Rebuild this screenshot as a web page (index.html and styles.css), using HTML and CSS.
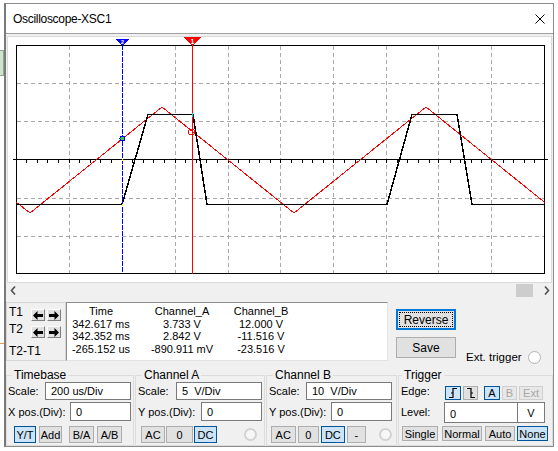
FILE: index.html
```html
<!DOCTYPE html>
<html lang="en">
<head>
    <meta charset="UTF-8">
    <title>Oscilloscope-XSC1</title>
    <link rel="stylesheet" href="styles.css">
</head>
<body>
<div class="desk">
    <div class="edge">
        <div class="edge-panel"></div>
        <div class="edge-wire"></div>
    </div>

    <div class="win">
        <div class="titlebar">
            <span class="title">Oscilloscope-XSC1</span>
            <svg class="close" width="10" height="10" viewBox="0 0 10 10">
                <path d="M0.5 0.5L9.5 9.5M9.5 0.5L0.5 9.5" stroke="#000" stroke-width="1"/>
            </svg>
        </div>

        <!-- scope display, drawn in page coordinates -->
        <div class="screen">
            <svg width="543" height="245" viewBox="8 37 543 245" shape-rendering="crispEdges">
                <g fill="none" stroke="#a9a9a9" stroke-dasharray="4 3">
                    <path d="M69.5 46V273M175.5 46V273M228.5 46V273M280.5 46V273M333.5 46V273M386.5 46V273M438.5 46V273M491.5 46V273"/>
                    <path d="M17 83.5H544M17 121.5H544M17 198.5H544M17 236.5H544"/>
                </g>
                <rect x="16.5" y="45.5" width="528" height="228" fill="none" stroke="#000" stroke-width="1.5"/>
                <path d="M13 159.5H548" stroke="#000" stroke-width="1.5"/>
                <path fill="none" stroke="#000" d="M26.5 160v3M37.5 160v3M47.5 160v3M58.5 160v3M69.5 160v3M79.5 160v3M90.5 160v3M100.5 160v3M111.5 160v3M122.5 160v3M132.5 160v3M143.5 160v3M153.5 160v3M164.5 160v3M175.5 160v3M185.5 160v3M196.5 160v3M206.5 160v3M217.5 160v3M228.5 160v3M238.5 160v3M249.5 160v3M259.5 160v3M270.5 160v3M280.5 160v3M291.5 160v3M302.5 160v3M312.5 160v3M323.5 160v3M333.5 160v3M344.5 160v3M355.5 160v3M365.5 160v3M376.5 160v3M386.5 160v3M397.5 160v3M407.5 160v3M418.5 160v3M429.5 160v3M438.5 160v3M450.5 160v3M460.5 160v3M471.5 160v3M481.5 160v3M491.5 160v3M503.5 160v3M513.5 160v3M524.5 160v3M534.5 160v3"/>

                <polyline points="16,202 30,213 162,107 294,213 426,107 545,202.6" fill="none" stroke="#ff0000"/>
                <polyline points="17,204.5 122,204.5 148,114.5 193,114.5 207,204.5 387,204.5 412,114.5 457,114.5 472,204.5 544,204.5" fill="none" stroke="#000" stroke-width="1.5"/>

                <path d="M122.5 45V273" stroke="#0000ff" stroke-dasharray="5 1"/>
                <path d="M192.5 44V274" stroke="#ff0000"/>

                <rect x="122" y="158.5" width="1" height="2" fill="#ffff00"/>
                <rect x="122" y="203.5" width="1" height="2" fill="#ffff00"/>
                <rect x="192" y="113" width="1" height="4" fill="#00e0e0"/>
                <circle cx="122.5" cy="138.5" r="2.5" fill="#33cc33" stroke="#0000ff"/>
                <circle cx="191.5" cy="132" r="3" fill="none" stroke="#ff0000"/>

                <polygon points="115.5,39 129.5,39 122.5,46" fill="#0000ff"/>
                <text x="122.5" y="44" class="mk mk-small">2</text>
                <polygon points="184,37 201,37 192.5,46" fill="#ff0000"/>
                <text x="192.5" y="43.5" class="mk">1</text>
            </svg>
        </div>

        <div class="hscroll">
            <div class="sb-left">
                <svg width="6" height="9" viewBox="0 0 6 9"><path d="M5 0.5L1.5 4.5L5 8.5" fill="none" stroke="#505050" stroke-width="1.6"/></svg>
            </div>
            <div class="sb-track"><div class="sb-thumb"></div></div>
            <div class="sb-right">
                <svg width="6" height="9" viewBox="0 0 6 9"><path d="M1 0.5L4.5 4.5L1 8.5" fill="none" stroke="#505050" stroke-width="1.6"/></svg>
            </div>
        </div>

        <div class="readbar">
            <div class="cursors">
                <div class="cur-row">
                    <span class="cur-label">T1</span>
                    <span class="arrow"><svg width="10" height="9" viewBox="0 0 10 9"><path d="M0 4.5L4.5 0V3H10V6H4.5V9Z"/></svg></span>
                    <span class="arrow"><svg width="10" height="9" viewBox="0 0 10 9"><path d="M10 4.5L5.5 0V3H0V6H5.5V9Z"/></svg></span>
                </div>
                <div class="cur-row">
                    <span class="cur-label">T2</span>
                    <span class="arrow"><svg width="10" height="9" viewBox="0 0 10 9"><path d="M0 4.5L4.5 0V3H10V6H4.5V9Z"/></svg></span>
                    <span class="arrow"><svg width="10" height="9" viewBox="0 0 10 9"><path d="M10 4.5L5.5 0V3H0V6H5.5V9Z"/></svg></span>
                </div>
                <div class="cur-diff">T2-T1</div>
            </div>

            <div class="readout">
                <span>Time</span><span>Channel_A</span><span>Channel_B</span>
                <span>342.617 ms</span><span>3.733 V</span><span>12.000 V</span>
                <span>342.352 ms</span><span>2.842 V</span><span>-11.516 V</span>
                <span>-265.152 us</span><span>-890.911 mV</span><span>-23.516 V</span>
            </div>

            <div class="actions">
                <div class="btn btn-big btn-default"><span class="focus">Reverse</span></div>
                <div class="btn btn-big">Save</div>
            </div>

            <div class="ext">Ext. trigger <span class="radio"></span></div>
        </div>

        <div class="groups">
            <fieldset class="group g-time">
                <legend>Timebase</legend>
                <div class="row r1"><span>Scale:</span><div class="field f-wide">200 us/Div</div></div>
                <div class="row r2"><span>X pos.(Div):</span><div class="field f-narrow">0</div></div>
                <div class="btnrow tb-btns">
                    <div class="btn on">Y/T</div>
                    <div class="btn">Add</div>
                    <div class="btn">B/A</div>
                    <div class="btn">A/B</div>
                </div>
            </fieldset>

            <fieldset class="group g-cha">
                <legend>Channel A</legend>
                <div class="row r1"><span>Scale:</span><div class="field f-wide">5  V/Div</div></div>
                <div class="row r2"><span>Y pos.(Div):</span><div class="field f-narrow">0</div></div>
                <div class="btnrow cha-btns">
                    <div class="btn">AC</div>
                    <div class="btn">0</div>
                    <div class="btn on">DC</div>
                    <span class="radio off"></span>
                </div>
            </fieldset>

            <fieldset class="group g-chb">
                <legend>Channel B</legend>
                <div class="row r1"><span>Scale:</span><div class="field f-wide">10  V/Div</div></div>
                <div class="row r2"><span>Y pos.(Div):</span><div class="field f-narrow">0</div></div>
                <div class="btnrow chb-btns">
                    <div class="btn">AC</div>
                    <div class="btn">0</div>
                    <div class="btn on">DC</div>
                    <div class="btn">-</div>
                    <span class="radio off"></span>
                </div>
            </fieldset>

            <fieldset class="group g-trig">
                <legend>Trigger</legend>
                <div class="trow edge-row">
                    <span class="t-label">Edge:</span>
                    <div class="btn on t-edge">
                        <svg width="10" height="10" viewBox="0 0 10 10"><path d="M1 9.5H5V0.5H9M3 5H5" fill="none" stroke="#000" stroke-width="1.2"/></svg>
                    </div>
                    <div class="btn t-edge t-fall">
                        <svg width="10" height="10" viewBox="0 0 10 10"><path d="M1 0.5H5V9.5H9M5 5H7" fill="none" stroke="#000" stroke-width="1.2"/></svg>
                    </div>
                    <div class="btn on t-src">A</div>
                    <div class="btn off t-src t-b">B</div>
                    <div class="btn off t-ext">Ext</div>
                </div>
                <div class="trow level-row">
                    <span class="t-label">Level:</span>
                    <div class="field f-level">0</div>
                    <div class="field f-unit">V</div>
                </div>
                <div class="btnrow trig-btns">
                    <div class="btn">Single</div>
                    <div class="btn">Normal</div>
                    <div class="btn">Auto</div>
                    <div class="btn on">None</div>
                </div>
            </fieldset>
        </div>
    </div>
</div>
</body>
</html>
```

FILE: styles.css
```css
* {
    box-sizing: border-box;
}
body {
    margin: 0;
    background: #fff;
    font-family: "Liberation Sans", Arial, sans-serif;
    font-size: 11px;
    color: #000;
}
.desk {
    display: flex;
    height: 451px;
    overflow: hidden;
}
.edge {
    width: 4px;
}
.edge-panel {
    margin-top: 50px;
    height: 26px;
    background: #cfe2cc;
    border: 1px solid #8fa88c;
    border-left: none;
}
.edge-wire {
    margin-top: 267px;
    height: 1px;
    background: #f39c4a;
}
.win {
    margin-top: 3px;
    width: 550px;
    height: 444px;
    background: #f0f0f0;
    border: 1px solid #8c8c8c;
    border-left: 2px solid #7a7a7a;
}
.titlebar {
    height: 30px;
    display: flex;
    align-items: center;
    justify-content: space-between;
    padding: 0 8px 0 7px;
    background: #fff;
    border-bottom: 1px solid #a0a0a0;
}
.title {
    font-size: 12px;
    letter-spacing: -0.3px;
}
.close {
    display: block;
}

/* scope screen */
.screen {
    width: 545px;
    height: 247px;
    margin: 2px 0 0 1px;
    background: #fff;
    border: 1px solid #dadada;
}
.screen svg {
    display: block;
}
.mk {
    font: bold 7px "Liberation Sans", sans-serif;
    fill: #fff;
    text-anchor: middle;
}
.mk-small {
    font-size: 6px;
}

.hscroll {
    display: flex;
    width: 545px;
    height: 15px;
    margin-left: 1px;
}
.sb-left {
    width: 17px;
    display: flex;
    align-items: center;
    padding-left: 3px;
}
.sb-track {
    flex: 1;
    display: flex;
    justify-content: flex-end;
    align-items: center;
}
.sb-thumb {
    width: 17px;
    height: 13px;
    background: #cdcdcd;
}
.sb-right {
    width: 19px;
    display: flex;
    align-items: center;
    padding-left: 11px;
}
.hscroll svg {
    display: block;
}

/* cursor readout bar */
.readbar {
    display: flex;
    height: 59px;
    margin-top: 4px;
}
.cursors {
    width: 60px;
    border: 1px solid #d6d6d6;
    padding: 6px 0 0 2px;
}
.cur-row {
    display: flex;
    height: 12px;
}
.cur-row + .cur-row {
    margin-top: 5px;
}
.cur-label {
    width: 22px;
    line-height: 7px;
    font-size: 12px;
}
.arrow {
    width: 14px;
    height: 12px;
    margin-right: 2px;
    display: flex;
    align-items: center;
    justify-content: center;
    background: #e1e1e1;
    border: 1px solid;
    border-color: #fdfdfd #7f7f7f #7f7f7f #fdfdfd;
}
.arrow svg {
    display: block;
}
.cur-diff {
    margin-top: 7px;
    line-height: 13px;
    font-size: 12px;
}
.readout {
    width: 322px;
    display: grid;
    grid-template-columns: 68px 94px 64px;
    grid-auto-rows: 12.7px;
    align-content: start;
    padding-top: 2px;
    line-height: 12.7px;
    text-align: center;
    white-space: nowrap;
    background: #fff;
    border: 1px solid;
    border-color: #8c8c8c #e3e3e3 #e3e3e3 #8c8c8c;
}
.actions {
    width: 60px;
    margin-left: 8px;
    padding-top: 7px;
    display: flex;
    flex-direction: column;
    gap: 7px;
}
.btn {
    display: flex;
    align-items: center;
    justify-content: center;
    height: 100%;
    background: #e1e1e1;
    border: 1px solid #adadad;
    white-space: nowrap;
}
.btn.on {
    background: #cce4f7;
    border-color: #005499;
}
.btn.off {
    color: #a6a6a6;
    background: #e8e8e8;
    border-color: #cfcfcf;
}
.btn-big {
    height: 21px;
    font-size: 12px;
}
.btn-default {
    border: 2px solid #0078d7;
    padding: 1px;
}
.focus {
    width: 100%;
    height: 100%;
    display: flex;
    align-items: center;
    justify-content: center;
    border: 1px dotted #000;
}
.ext {
    height: 14px;
    margin: 48px 0 0 10px;
    display: flex;
    align-items: center;
    font-size: 11.5px;
}
.radio {
    width: 13px;
    height: 13px;
    border-radius: 50%;
    border: 1px solid #b5b5b5;
    background: #fff;
}
.ext .radio {
    margin-left: 6px;
}
.radio.off {
    border: 2px solid #d2d2d2;
    background: #f7f7f7;
}

/* control groups */
.groups {
    display: flex;
    gap: 1px;
    margin-top: 8px;
}
.group {
    margin: 0;
    padding: 0 2px;
    height: 77px;
    min-width: 0;
    border: 1px solid #dcdcdc;
}
.group legend {
    margin-left: 4px;
    padding: 0 2px;
    line-height: 13px;
    font-size: 12px;
}
.g-time {
    width: 128px;
    padding-left: 1px;
}
.g-cha {
    width: 130px;
}
.g-chb {
    width: 131px;
    padding-right: 4px;
}
.g-trig {
    width: 155px;
}
.g-trig legend {
    margin-left: 1px;
}
.row {
    display: flex;
    align-items: center;
    justify-content: space-between;
}
.r1 {
    height: 18px;
}
.r2 {
    height: 19px;
    margin-top: 2px;
}
.field {
    height: 100%;
    display: flex;
    align-items: center;
    padding-left: 5px;
    white-space: pre;
    background: #fff;
    border: 1px solid #7a7a7a;
}
.f-wide {
    width: 86px;
}
.f-narrow {
    width: 61px;
}
.btnrow {
    display: flex;
    align-items: center;
    height: 17px;
    margin-top: 5px;
}
.tb-btns {
    padding-left: 6px;
    gap: 3px;
}
.tb-btns .btn {
    width: 25px;
}
.tb-btns .btn:nth-child(1) {
    width: 22px;
}
.tb-btns .btn:nth-child(2) {
    width: 23px;
    margin-right: 4px;
}
.cha-btns {
    padding-left: 3px;
    gap: 1px;
}
.cha-btns .btn:nth-child(1) {
    width: 24px;
}
.cha-btns .btn:nth-child(2) {
    width: 27px;
}
.cha-btns .btn:nth-child(3) {
    width: 23px;
}
.cha-btns .radio {
    margin-left: 26px;
}
.chb-btns {
    padding-left: 2px;
    gap: 2px;
}
.chb-btns .btn:nth-child(1) {
    width: 25px;
}
.chb-btns .btn:nth-child(2) {
    width: 22px;
}
.chb-btns .btn:nth-child(3) {
    width: 24px;
}
.chb-btns .btn:nth-child(4) {
    width: 20px;
}
.chb-btns .radio {
    margin-left: 11px;
}

/* trigger */
.trow {
    display: flex;
}
.t-label {
    width: 44px;
    align-self: center;
}
.edge-row {
    height: 18px;
    align-items: flex-end;
}
.edge-row .btn {
    height: 14px;
}
.t-edge {
    width: 16px;
}
.t-fall {
    width: 15px;
    margin-left: 2px;
}
.t-src {
    width: 16px;
    margin-left: 6px;
}
.t-b {
    width: 15px;
    margin-left: 2px;
}
.t-ext {
    width: 24px;
    margin-left: 2px;
}
.level-row {
    height: 21px;
    margin-top: 2px;
}
.level-row .t-label {
    width: 43px;
    margin-top: -2px;
}
.f-level {
    width: 74px;
    padding-top: 3px;
}
.f-unit {
    width: 27px;
    border-left: none;
    justify-content: center;
    padding-left: 0;
}
.trig-btns {
    height: 15px;
    margin-top: 3px;
    padding-left: 1px;
}
.trig-btns .btn:nth-child(1) {
    width: 36px;
}
.trig-btns .btn:nth-child(2) {
    width: 40px;
    margin-left: 4px;
}
.trig-btns .btn:nth-child(3) {
    width: 30px;
    margin-left: 3px;
}
.trig-btns .btn:nth-child(4) {
    width: 31px;
    margin-left: 2px;
}
```
